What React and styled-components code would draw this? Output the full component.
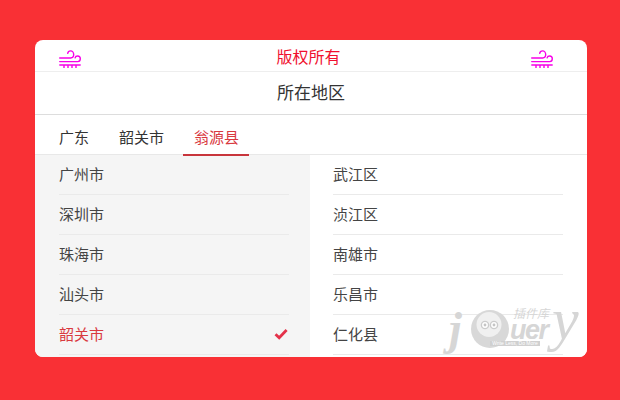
import React from "react";
import styled, { createGlobalStyle } from "styled-components";

const GlobalStyle = createGlobalStyle`
  * {
    box-sizing: border-box;
    margin: 0;
    padding: 0;
    list-style: none;
  }
  body {
    background: #f93035;
    font-family: "Noto Sans CJK SC", "Liberation Sans", sans-serif;
  }
`;

const leftItems = ["广州市", "深圳市", "珠海市", "汕头市", "韶关市"];
const rightItems = ["武江区", "浈江区", "南雄市", "乐昌市", "仁化县"];
const tabs = ["广东", "韶关市", "翁源县"];

const WindIcon = () => (
  <WindSvg viewBox="0 0 22 18" fill="none" stroke="#f700e8" strokeWidth="1.4" strokeLinecap="round">
    <path d="M.7 8h11c1.9 0 3-1.4 3-3.4S13.2.9 11.6.9C10 .9 8.9 2 8.7 3.4" />
    <path d="M.7 11.6h18c1.6 0 2.6-1.2 2.6-2.8S20.2 6 18.6 6c-1.2 0-2.2.7-2.5 1.9" />
    <path d="M.8 15h20.4" />
    <path d="M5 15v3M9 15v3M13 15v3M17 15v3" strokeLinecap="butt" />
  </WindSvg>
);

const App = () => {
  return (
    <Page>
      <GlobalStyle />
      <Card>
        <Header>
          <WindIcon />
          <HeaderTitle>版权所有</HeaderTitle>
          <WindIcon />
        </Header>
        <Title>所在地区</Title>
        <Tabs>
          {tabs.map((t, i) => (
            <Tab key={t} $active={i === 2}>{t}</Tab>
          ))}
        </Tabs>
        <Lists>
          <Column $gray>
            {leftItems.map((t, i) => (
              <Row key={t} $active={i === 4}>
                {t}
                {i === 4 && (
                  <svg width="14" height="12" viewBox="0 0 14 12">
                    <path d="M1.5 6.2 5.2 9.8 12.6 2" fill="none" stroke="#e4324a" strokeWidth="2.8" />
                  </svg>
                )}
              </Row>
            ))}
          </Column>
          <Column>
            {rightItems.map((t) => (
              <Row key={t}>{t}</Row>
            ))}
          </Column>
        </Lists>
        <Watermark>
          <WmJ>j</WmJ>
          <svg width="40" height="40" viewBox="0 0 40 40">
            <circle cx="20" cy="20" r="19" fill="#d8d8d8" />
            <circle cx="19" cy="15.5" r="12.5" fill="#f0f0f0" />
            <circle cx="15" cy="16" r="3.6" fill="#fff" stroke="#cccccc" strokeWidth="1.4" />
            <circle cx="24" cy="16" r="3.6" fill="#fff" stroke="#cccccc" strokeWidth="1.4" />
            <circle cx="15" cy="16" r="1.4" fill="#c4c4c4" />
            <circle cx="24" cy="16" r="1.4" fill="#c4c4c4" />
          </svg>
          <WmText>
            <WmCn>插件库</WmCn>
            <WmUery>uer</WmUery>
          </WmText>
          <WmY>y</WmY>
          <WmBar>Write Less, Do More</WmBar>
        </Watermark>
      </Card>
    </Page>
  );
};

export default App;

const Page = styled.div`
  width: 620px;
  height: 400px;
  padding: 40px 33px 43px 35px;
`;
const Card = styled.div`
  position: relative;
  height: 317px;
  background: #fff;
  border-radius: 8px;
  overflow: hidden;
  display: flex;
  flex-direction: column;
`;
const Header = styled.div`
  height: 32px;
  padding: 0 34px 0 24px;
  display: flex;
  align-items: center;
  justify-content: space-between;
  border-bottom: 1px solid #eeeeee;
`;
const WindSvg = styled.svg`
  width: 22px;
  height: 18px;
  margin-top: 7px;
`;
const HeaderTitle = styled.div`
  font-size: 16px;
  line-height: 32px;
  color: #f0102f;
  margin: 0 -5px 0 0;
`;
const Title = styled.div`
  height: 43px;
  line-height: 39px;
  text-align: center;
  font-size: 17px;
  color: #333;
  border-bottom: 1px solid #dddddd;
`;
const Tabs = styled.div`
  height: 40px;
  padding-left: 24px;
  display: flex;
  gap: 30px;
  border-bottom: 1px solid #e8e8e8;
`;
const Tab = styled.div`
  position: relative;
  font-size: 15px;
  line-height: 44px;
  height: 40px;
  color: ${(p) => (p.$active ? "#d93a3f" : "#333")};
  ${(p) =>
    p.$active &&
    `&::after {
      content: "";
      position: absolute;
      left: -11px;
      right: -10px;
      bottom: -1px;
      height: 2px;
      background: #c8353c;
    }`}
`;
const Lists = styled.div`
  flex: 1;
  display: flex;
`;
const Column = styled.ul`
  flex: ${(p) => (p.$gray ? "0 0 275px" : "1")};
  padding: 0 ${(p) => (p.$gray ? "21px" : "24px")} 0 ${(p) => (p.$gray ? "24px" : "23px")};
  background: ${(p) => (p.$gray ? "#f5f5f5" : "#fff")};
`;
const Row = styled.li`
  height: 40px;
  display: flex;
  align-items: center;
  justify-content: space-between;
  padding: 0 1px 2px 0;
  font-size: 15px;
  color: ${(p) => (p.$active ? "#d93a3f" : "#444")};
  border-bottom: 1px solid #eaeaea;
`;
const Watermark = styled.div`
  position: absolute;
  left: 414px;
  top: 266px;
  width: 130px;
  height: 46px;
  display: flex;
  align-items: center;
  color: #d6d6d6;
  pointer-events: none;
`;
const WmJ = styled.span`
  font: italic bold 46px/46px "Liberation Serif", serif;
  width: 21px;
`;
const WmText = styled.div`
  display: flex;
  flex-direction: column;
  width: 42px;
  margin-top: -12px;
`;
const WmCn = styled.span`
  font-size: 12px;
  line-height: 15px;
  font-style: italic;
  padding-left: 3px;
`;
const WmUery = styled.span`
  font: italic bold 27px/21px "Liberation Sans", sans-serif;
  letter-spacing: -1.5px;
`;
const WmY = styled.span`
  font: italic 60px/46px "Liberation Serif", serif;
  margin-top: -20px;
`;
const WmBar = styled.span`
  position: absolute;
  left: 41px;
  top: 35px;
  width: 50px;
  height: 5px;
  background: #d0d0d0;
  color: #fff;
  font: 5px/5px "Liberation Sans", sans-serif;
  text-align: center;
  white-space: nowrap;
`;
